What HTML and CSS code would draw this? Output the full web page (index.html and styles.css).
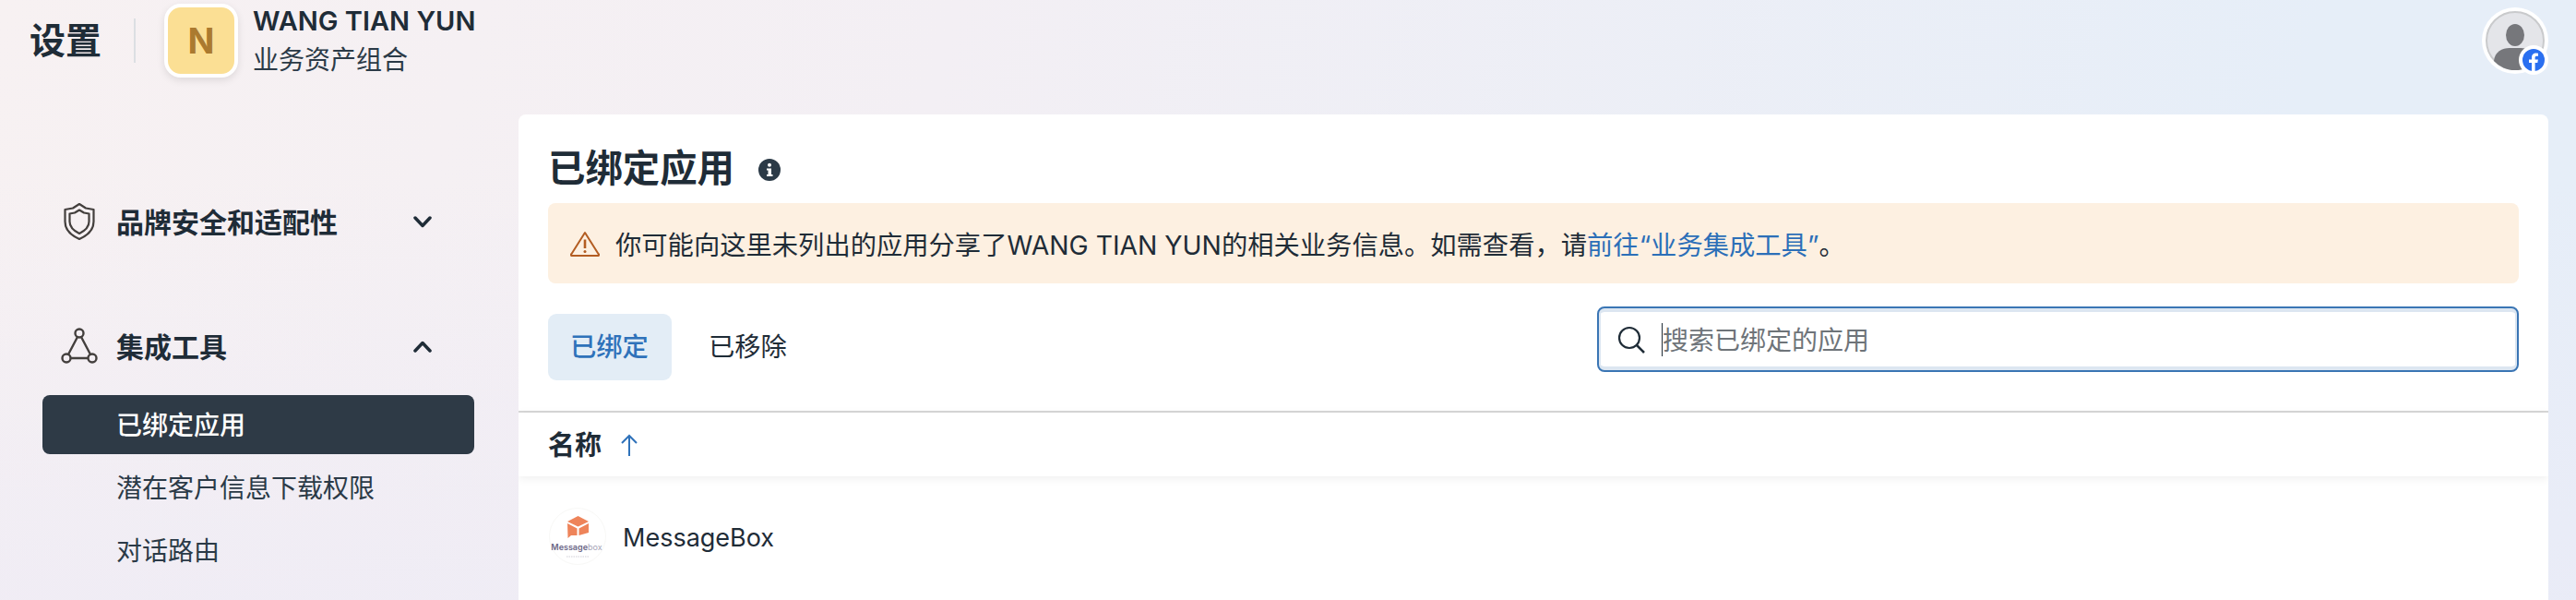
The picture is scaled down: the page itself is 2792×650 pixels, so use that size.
FILE: index.html
```html
<!DOCTYPE html>
<html lang="zh-CN">

<head>
    <meta charset="UTF-8">
    <title>设置</title>
    <link rel="stylesheet" href="styles.css">
</head>

<body>
    <header class="topbar">
        <h1 class="page-name">设置</h1>
        <div class="divider"></div>
        <div class="portfolio-badge">N</div>
        <div class="portfolio-info">
            <div class="portfolio-name">WANG TIAN YUN</div>
            <div class="portfolio-type">业务资产组合</div>
        </div>
        <div class="profile">
            <svg class="profile-pic" viewBox="0 0 64 64">
                <circle cx="32" cy="32" r="31" fill="#e4e5e9" stroke="#c9cacc" stroke-width="2" />
                <ellipse cx="32" cy="26" rx="10" ry="12" fill="#76777b" />
                <path d="M9 54 C10 44 18 40 26 40 H38 C46 40 54 44 55 54 A31 31 0 0 1 9 54 Z" fill="#76777b" />
            </svg>
            <svg class="fb-badge" viewBox="0 0 32 32">
                <circle cx="16" cy="16" r="16" fill="#fff" />
                <circle cx="16" cy="16" r="12" fill="#2a6ff0" />
                <path d="M14 28 V19 H11 V15.500 H14 V13 C14 10 16 8.500 18.500 8.500 L21 8.700 V11.800 H19.300 C18 11.800 17.600 12.500 17.600 13.500 V15.500 H20.900 L20.300 19 H17.600 V28 Z" fill="#fff" />
            </svg>
        </div>
    </header>

    <div class="layout">
        <nav class="sidebar">
            <div class="nav-group">
                <svg class="nav-icon" viewBox="0 0 40 40" fill="none" stroke="#433f3d" stroke-width="2.200">
                    <path d="M20 1 L27 5.500 L35.500 7 V20 C35.500 29 29 35 20 39 C11 35 4.500 29 4.500 20 V7 L13 5.500 Z" stroke-linejoin="round" />
                    <path d="M20 7.500 L25 10.500 L30.500 11.500 V20 C30.500 26 26 30 20 33 C14 30 9.500 26 9.500 20 V11.500 L15 10.500 Z" stroke-linejoin="round" />
                </svg>
                <span class="nav-label">品牌安全和适配性</span>
                <svg class="chevron" viewBox="0 0 20 13">
                    <path d="M2 2 L10 10.500 L18 2" />
                </svg>
            </div>

            <div class="nav-group nav-group-open">
                <svg class="nav-icon" viewBox="0 0 40 40" fill="none" stroke="#433f3d" stroke-width="2.400">
                    <circle cx="20" cy="6" r="4.500" />
                    <circle cx="6" cy="33" r="4.500" />
                    <circle cx="34" cy="33" r="4.500" />
                    <path d="M18 10 L8 29 M22 10 L32 29 M10.500 33 H29.500" />
                </svg>
                <span class="nav-label">集成工具</span>
                <svg class="chevron" viewBox="0 0 20 13">
                    <path d="M2 11 L10 2.500 L18 11" />
                </svg>
            </div>

            <ul class="sub-nav">
                <li class="sub-item active">已绑定应用</li>
                <li class="sub-item">潜在客户信息下载权限</li>
                <li class="sub-item">对话路由</li>
            </ul>
        </nav>

        <main class="card">
            <div class="card-top">
                <div class="title-row">
                    <h2>已绑定应用</h2>
                    <svg class="info-icon" viewBox="0 0 24 24">
                        <circle cx="12" cy="12" r="12" fill="#2b3a47" />
                        <circle cx="12" cy="6.800" r="2" fill="#fff" />
                        <path d="M9 10.500 H14 V17 H15.500 V19 H9 V17 H10.500 V12.500 H9 Z" fill="#fff" />
                    </svg>
                </div>

                <div class="alert">
                    <svg class="alert-icon" viewBox="0 0 32 28" fill="none" stroke="#b35d22" stroke-width="2">
                        <path d="M16 2 L30.500 25 A1 1 0 0 1 29.500 27 H2.500 A1 1 0 0 1 1.500 25 Z" stroke-linejoin="round" />
                        <path d="M16 9.500 V19" stroke-width="2.600" />
                        <circle cx="16" cy="22.500" r="1.500" fill="#b35d22" stroke="none" />
                    </svg>
                    <span>你可能向这里未列出的应用分享了WANG TIAN YUN的相关业务信息。如需查看，请<a href="#">前往“业务集成工具”</a>。</span>
                </div>

                <div class="toolbar">
                    <div class="tabs">
                        <div class="tab tab-active">已绑定</div>
                        <div class="tab">已移除</div>
                    </div>
                    <div class="search">
                        <svg class="search-icon" viewBox="0 0 30 30" fill="none" stroke="#1f2c37" stroke-width="2.200">
                            <circle cx="13" cy="13" r="11" />
                            <path d="M21 21 L29 29" stroke-width="2.600" />
                        </svg>
                        <span class="caret"></span>
                        <input type="text" placeholder="搜索已绑定的应用">
                    </div>
                </div>
            </div>

            <div class="table-head">
                <span>名称</span>
                <svg class="sort-arrow" viewBox="0 0 18 24" fill="none" stroke="#2f72ba" stroke-width="2">
                    <path d="M9 24 V2 M1 10 L9 2 L17 10" />
                </svg>
            </div>

            <div class="table-row">
                <svg class="app-logo" viewBox="0 0 62 62">
                    <circle cx="31" cy="31" r="30.500" fill="#fff" stroke="#f8f8f6" />
                    <path d="M31.500 9 L43 15 L31.500 20.500 L20 15 Z" fill="#ee845a" />
                    <path d="M20 17 L30.500 22.500 V30 H24 L20.500 33 Z" fill="#ee845a" />
                    <path d="M43 17 L32.500 22.500 V30 L43 27 Z" fill="#ee845a" />
                    <text class="logo-text" x="30" y="45.500" text-anchor="middle">Message<tspan class="logo-text-light">box</tspan></text>
                    <path d="M19 53 H44" stroke="#d0ced6" stroke-width="1" stroke-dasharray="1.500 1" />
                </svg>
                <span class="app-name">MessageBox</span>
            </div>
        </main>
    </div>
</body>

</html>
```
FILE: styles.css
```css
* {
    box-sizing: border-box;
    margin: 0;
    padding: 0;
}

html,
body {
    height: 650px;
    overflow: hidden;
}

body {
    font-family: "Inter", "Noto Sans CJK SC", sans-serif;
    color: #1f2c37;
    background:
        linear-gradient(180deg, rgba(236, 234, 246, 0) 30%, rgba(236, 234, 246, 0.6) 100%),
        linear-gradient(105deg, #f7f1f2 0%, #f3eff4 35%, #e6eef8 85%);
}

.topbar {
    display: flex;
    align-items: center;
    height: 124px;
    padding: 0 30px 36px 32px;
}

.page-name {
    width: 113px;
    font-size: 39px;
    line-height: 48px;
    font-weight: 700;
}

.divider {
    width: 2px;
    height: 48px;
    background-color: #dcdfe3;
}

.portfolio-badge {
    display: flex;
    align-items: center;
    justify-content: center;
    width: 80px;
    height: 80px;
    margin-left: 31px;
    border: 4px solid #fff;
    border-radius: 18px;
    background-color: #fbdf94;
    color: #ab7a2f;
    font-size: 38px;
    font-weight: 700;
    box-shadow: 0 3px 8px rgba(0, 0, 0, 0.1);
}

.portfolio-info {
    margin-left: 16px;
    flex: 1;
}

.portfolio-name {
    font-size: 29px;
    line-height: 36px;
    font-weight: 600;
}

.portfolio-type {
    margin-top: 6px;
    font-size: 28px;
    line-height: 36px;
    color: #2b3a47;
}

.profile {
    position: relative;
    width: 72px;
    height: 72px;
    padding: 4px;
    border-radius: 50%;
    background-color: #fff;
}

.profile-pic {
    display: block;
    width: 64px;
    height: 64px;
}

.fb-badge {
    position: absolute;
    top: 41px;
    left: 40px;
    width: 32px;
    height: 32px;
}

.layout {
    display: flex;
    align-items: flex-start;
}

.sidebar {
    width: 562px;
    flex-shrink: 0;
    padding: 84px 48px 0 46px;
}

.nav-group {
    display: flex;
    align-items: center;
    height: 64px;
    padding: 0 46px 0 20px;
}

.nav-group-open {
    margin-top: 71px;
}

.nav-icon {
    width: 40px;
    height: 40px;
    margin-right: 20px;
    flex-shrink: 0;
}

.nav-label {
    flex: 1;
    margin-top: -3px;
    font-size: 30px;
    font-weight: 700;
}

.chevron {
    width: 20px;
    height: 13px;
    fill: none;
    stroke: #1f2c37;
    stroke-width: 3.500;
    stroke-linecap: round;
    stroke-linejoin: round;
}

.sub-nav {
    display: flex;
    flex-direction: column;
    gap: 4px;
    margin-top: 21px;
    list-style: none;
}

.sub-item {
    height: 64px;
    padding-left: 80px;
    border-radius: 8px;
    font-size: 28px;
    line-height: 66px;
    color: #2b3a47;
}

.sub-item.active {
    background-color: #2e3a46;
    color: #fff;
    font-weight: 500;
}

.card {
    flex: 1;
    height: 526px;
    margin-right: 30px;
    border-radius: 8px 8px 0 0;
    background-color: #fff;
    overflow: hidden;
}

.card-top {
    padding: 35px 32px 33px;
    border-bottom: 2px solid #d8d8d8;
}

.title-row {
    display: flex;
    align-items: center;
    gap: 26px;
    height: 48px;
    margin-bottom: 13px;
}

.title-row h2 {
    font-size: 40.400px;
    line-height: 48px;
    font-weight: 700;
}

.info-icon {
    width: 24px;
    height: 24px;
    margin-top: 2px;
}

.alert {
    display: flex;
    align-items: center;
    gap: 17px;
    height: 87px;
    padding: 0 24px;
    border-radius: 8px;
    background-color: #fdf0e1;
    font-size: 28.300px;
}

.alert-icon {
    width: 32px;
    height: 28px;
    flex-shrink: 0;
}

.alert a {
    color: #2c6fb8;
    text-decoration: none;
}

.toolbar {
    display: flex;
    justify-content: space-between;
    height: 80px;
    margin-top: 25px;
}

.tabs {
    display: flex;
    align-self: flex-end;
    gap: 16px;
}

.tab {
    height: 72px;
    padding: 0 24px;
    border-radius: 9px;
    font-size: 28.300px;
    line-height: 72px;
}

.tab-active {
    width: 134px;
    background-color: #e3edf6;
    color: #2f72ba;
    font-weight: 500;
}

.search {
    display: flex;
    align-items: center;
    width: 999px;
    height: 71px;
    padding: 0 20px;
    border: 2px solid #3a75b4;
    border-radius: 8px;
    box-shadow: inset 0 4px 0 #dce6f1, inset 0 -4px 0 #dce6f1, inset 2px 0 0 #dce6f1, inset -2px 0 0 #dce6f1;
}

.search-icon {
    width: 30px;
    height: 30px;
    flex-shrink: 0;
}

.caret {
    width: 1px;
    height: 36px;
    margin-left: 18px;
    background-color: #1f2c37;
}

.search input {
    flex: 1;
    padding-top: 2px;
    border: none;
    outline: none;
    background: none;
    font-family: inherit;
    font-size: 28px;
}

.search input::placeholder {
    color: #6e7479;
    opacity: 1;
}

.table-head {
    position: relative;
    display: flex;
    align-items: center;
    gap: 21px;
    height: 69px;
    padding-left: 32px;
    font-size: 29px;
    font-weight: 700;
    box-shadow: 0 2px 10px rgba(0, 0, 0, 0.07);
}

.table-head span {
    margin-top: -4px;
}

.sort-arrow {
    width: 18px;
    height: 24px;
}

.table-row {
    display: flex;
    align-items: center;
    gap: 18px;
    padding: 34px 0 0 33px;
}

.app-name {
    margin-top: 3px;
    font-size: 27px;
}

.app-logo {
    width: 62px;
    height: 62px;
    flex-shrink: 0;
}

.logo-text {
    font-family: "Inter", sans-serif;
    font-size: 9px;
    font-weight: 600;
    fill: #6a6585;
}

.logo-text-light {
    font-weight: 400;
    fill: #a5a2b5;
}
```
